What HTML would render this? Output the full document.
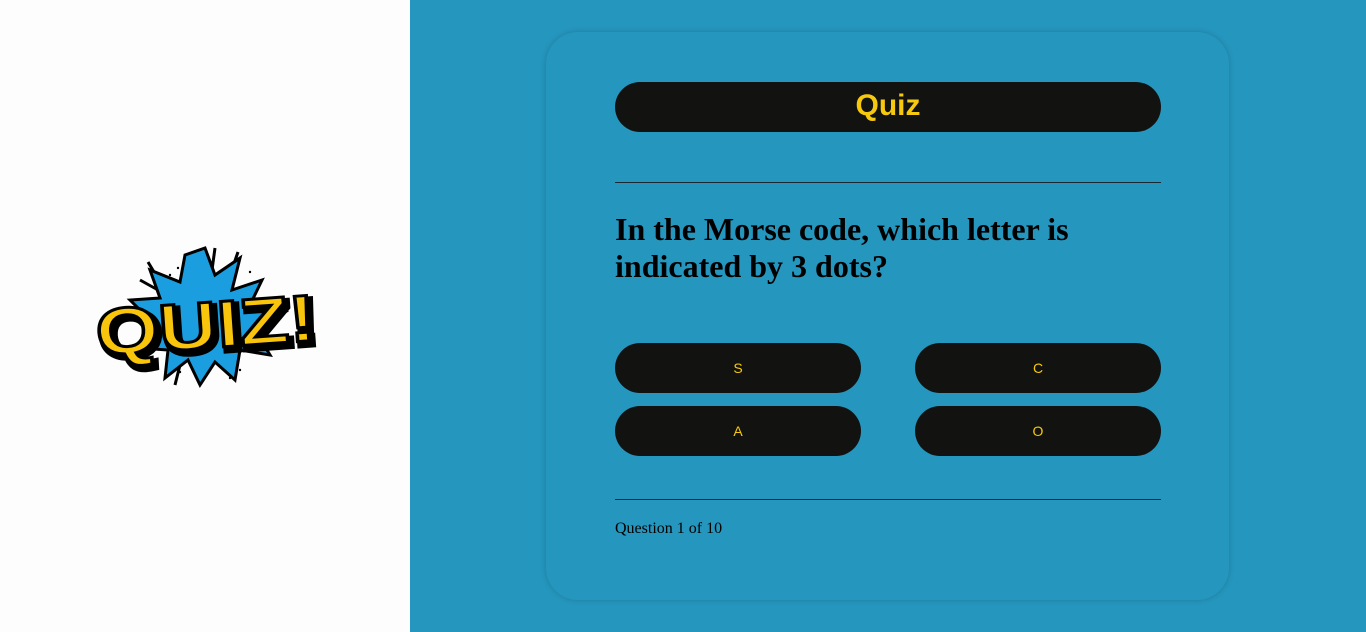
<!DOCTYPE html>
<html><head><style>
html,body{margin:0;padding:0;width:1366px;height:632px;overflow:hidden;font-family:"Liberation Sans",sans-serif}
.left{position:absolute;left:0;top:0;width:410px;height:632px;background:#fdfdfd}
.right{position:absolute;left:410px;top:0;width:956px;height:632px;background:#2596be}
.card{position:absolute;left:546px;top:32px;width:683px;height:568px;border-radius:32px;background:#2596be;box-shadow:0 0 6px rgba(0,0,0,.18)}
.title{position:absolute;left:615px;top:82px;width:546px;height:50px;border-radius:25px;background:#121210;color:#f6c90e;font-weight:bold;font-size:30px;line-height:48px;text-align:center}
.hr{position:absolute;left:615px;width:546px;height:1px;background:#1a2a30}
.q{position:absolute;left:615px;top:211px;width:546px;font-family:"Liberation Serif",serif;font-weight:bold;font-size:32px;line-height:37px;color:#000}
.btn{position:absolute;width:246px;height:50px;border-radius:25px;background:#121210;color:#f6c90e;font-size:14px;line-height:50px;text-align:center}
.foot{position:absolute;left:615px;top:520px;font-family:"Liberation Serif",serif;font-size:16px;color:#000}
</style></head><body>
<div class="left">
<svg width="410" height="632" style="position:absolute;left:0;top:0">
<g fill="#000">
<circle cx="170" cy="275" r="1.2"/><circle cx="178" cy="268" r="1.2"/><circle cx="186" cy="262" r="1.2"/><circle cx="250" cy="272" r="1.2"/><circle cx="258" cy="282" r="1.2"/><circle cx="240" cy="370" r="1.2"/><circle cx="230" cy="378" r="1.2"/><circle cx="180" cy="372" r="1.2"/>
</g>
<g stroke="#000" stroke-width="3">
<line x1="148" y1="262" x2="160" y2="282"/><line x1="140" y1="280" x2="158" y2="290"/><line x1="238" y1="252" x2="230" y2="275"/><line x1="215" y1="248" x2="212" y2="270"/><line x1="175" y1="385" x2="180" y2="365"/>
</g>
<polygon points="205,248 215,275 240,258 232,290 262,280 250,305 285,312 255,330 270,355 240,350 235,380 215,362 200,385 188,360 165,378 168,350 140,348 155,325 130,300 160,298 150,270 180,282 185,255" fill="#1a9ee0" stroke="#000" stroke-width="3"/>
<text x="209" y="352" text-anchor="middle" font-family="Liberation Sans" font-weight="bold" font-size="66" fill="#000" stroke="#000" stroke-width="6" transform="rotate(-4 205 330)" textLength="220" lengthAdjust="spacingAndGlyphs">QUIZ!</text>
<text x="206" y="348" text-anchor="middle" font-family="Liberation Sans" font-weight="bold" font-size="66" fill="#f8c40c" stroke="#000" stroke-width="3" transform="rotate(-4 205 330)" textLength="220" lengthAdjust="spacingAndGlyphs">QUIZ!</text>
</svg>
</div>
<div class="right"></div>
<div class="card"></div>
<div class="title">Quiz</div>
<div class="hr" style="top:182px"></div>
<div class="q">In the Morse code, which letter is indicated by 3 dots?</div>
<div class="btn" style="left:615px;top:343px">S</div>
<div class="btn" style="left:915px;top:343px">C</div>
<div class="btn" style="left:615px;top:406px">A</div>
<div class="btn" style="left:915px;top:406px">O</div>
<div class="hr" style="top:499px"></div>
<div class="foot">Question 1 of 10</div>
</body></html>
